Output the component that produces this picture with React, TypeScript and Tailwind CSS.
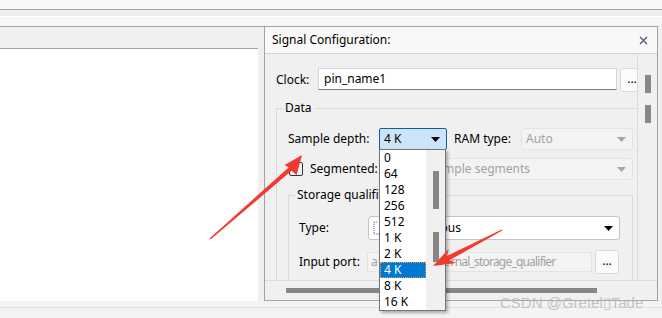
import React from 'react';

const items = ['0', '64', '128', '256', '512', '1 K', '2 K', '4 K', '8 K', '16 K'];

function Arrow({ className, disabled }: { className?: string; disabled?: boolean }) {
  return (
    <svg width="9" height="5" viewBox="0 0 9 5" className={className}>
      <path d="M0 0H9L4.5 5Z" fill={disabled ? '#a6a6a6' : '#000'} />
    </svg>
  );
}

function Combo({
  text,
  disabled,
  className,
  textClass,
  children,
}: {
  text: string;
  disabled?: boolean;
  className?: string;
  textClass?: string;
  children?: React.ReactNode;
}) {
  return (
    <div
      className={`flex items-center rounded-[3px] border pl-[4px] pr-[6px] ${
        disabled ? 'border-[#e3e3e3] bg-[#f3f3f3] text-[#a2a2a2]' : 'border-[#c5c5c5] bg-white text-black'
      } ${className ?? ''}`}
    >
      {children}
      <span className={`flex-1 whitespace-pre overflow-hidden ${textClass ?? ''}`}>{text}</span>
      <Arrow disabled={disabled} />
    </div>
  );
}

function Dots({ className }: { className?: string }) {
  return (
    <div
      className={`flex items-center justify-center rounded-[3px] border border-[#dadada] bg-[#fbfbfb] text-[12px] leading-none pb-[3px] ${className ?? ''}`}
    >
      ...
    </div>
  );
}

export default function App() {
  return (
    <div className="relative w-[662px] h-[318px] overflow-hidden bg-[#f0f0f0] font-['Noto_Sans',sans-serif] text-[12px] text-black">
      {/* top strips */}
      <div className="h-[9px] bg-[#f7f7f7]" />
      <div className="h-px bg-[#a3a3a3]" />
      <div className="h-[6px] bg-[#eeeeee]" />
      <div className="h-px bg-white" />
      <div className="h-[9px] bg-[#f6f6f6]" />
      <div className="h-px w-[658px] bg-[#a3a3a3]" />

      <div className="flex h-[274px]">
        {/* left panel */}
        <div className="flex w-[258px] flex-col">
          <div className="h-[22px] bg-[#f0f0f0] border-b border-[#a3a3a3]" />
          <div className="flex-1 bg-white" />
        </div>
        <div className="w-[6px] bg-[#f0f0f0]" />

        {/* right panel */}
        <div className="flex w-[394px] flex-col border-x border-b border-[#a3a3a3] bg-[#f0f0f0]">
          <div className="flex h-[27px] items-center border-b border-[#d4d4d4] bg-[#f8f8f8] pl-[7px] pr-[9px]">
            <span className="flex-1">Signal Configuration:</span>
            <svg width="9" height="9" viewBox="0 0 9 9">
              <path d="M1 1L8 8M8 1L1 8" stroke="#4b5a6d" strokeWidth="1.3" />
            </svg>
          </div>

          <div className="flex h-[226px]">
            {/* viewport */}
            <div className="w-[372px] overflow-hidden">
              <div className="w-[390px] pl-[11px] pt-[14px]">
                <div className="flex items-start">
                  <span className="w-[42px] pt-[3px]">Clock:</span>
                  <div className="h-[22px] w-[299px] border border-[#d5d5d5] border-b-[#7a7a7a] bg-white pl-[5px] leading-[20px]">
                    pin_name1
                  </div>
                  <Dots className="ml-[3px] h-[24px] w-[24px]" />
                </div>

                <fieldset className="mt-[9px] w-[369px] border border-[#d9d9d9]">
                  <legend className="ml-[5px] px-[3px] leading-[14px]">Data</legend>
                  <div className="pl-[11px] pb-[20px]">
                    <div className="mt-[13px] flex items-center">
                      <span className="w-[91px]">Sample depth:</span>
                      <div className="flex h-[22px] w-[68px] items-center rounded-[2px] border border-[#0b5ea8] bg-[#cce4f7] pl-[4px] pr-[6px]">
                        <span className="flex-1">4 K</span>
                        <Arrow />
                      </div>
                      <span className="ml-[7px] w-[67px]">RAM type:</span>
                      <Combo text="Auto" disabled className="h-[22px] w-[112px]" />
                    </div>
                    <div className="mt-[8px] flex items-center">
                      <div className="ml-px h-[14px] w-[14px] rounded-[2px] border border-[#333333]" />
                      <span className="ml-[7px] w-[69px]">Segmented:</span>
                      <Combo text="2  2 K sample segments" disabled textClass="pl-[13px]" className="h-[22px] w-[254px]" />
                    </div>

                    <fieldset className="mt-[8px] w-[345px] border border-[#d9d9d9]">
                      <legend className="ml-[6px] px-[2px] leading-[14px]">Storage qualifier</legend>
                      <div className="pl-[10px] pb-[20px]">
                        <div className="mt-[14px] flex items-center">
                          <span className="w-[69px]">Type:</span>
                          <Combo text="Continuous" className="h-[24px] w-[252px]">
                            <svg width="10" height="14" viewBox="0 0 10 14" className="mr-[13px]">
                              <path d="M1 1V13M1 13H9M1 1H4" stroke="#3a6fc4" strokeWidth="1" strokeDasharray="1 1" fill="none" />
                            </svg>
                          </Combo>
                        </div>
                        <div className="mt-[10px] flex items-center">
                          <span className="w-[68px]">Input port:</span>
                          <div className="h-[20px] w-[225px] border border-[#e3e3e3] bg-[#f3f3f3] pl-[3px] leading-[18px] text-[#a2a2a2] whitespace-nowrap overflow-hidden">
                            <span className="tracking-[0.5px]">auto_sq_exte</span>
                            <span className="tracking-[-0.8px]">rnal_storage_qualifier</span>
                          </div>
                          <Dots className="ml-[3px] h-[24px] w-[24px]" />
                        </div>
                        <div className="mt-[10px] h-[22px]" />
                      </div>
                    </fieldset>
                  </div>
                </fieldset>
              </div>
            </div>

            {/* vertical scrollbar */}
            <div className="flex w-[20px] flex-col items-center border-l border-[#dcdcdc] bg-[#f0f0f0] pt-[21px]">
              <div className="h-[18px] w-[6px] bg-[#868686]" />
              <div className="mt-[12px] h-[18px] w-[6px] bg-[#868686]" />
            </div>
          </div>

          {/* horizontal scrollbar */}
          <div className="flex-1 border-t border-[#dcdcdc] pl-[21px] pt-[7px]">
            <div className="h-[5px] w-[311px] bg-[#868686]" />
          </div>
        </div>
      </div>

      <div className="h-[6px] bg-[#f3f3f3]" />
      <div className="h-px bg-[#e2e2e2]" />
      <div className="h-[10px] bg-[#f3f3f3]" />

      {/* open dropdown list */}
      <div className="absolute left-[379px] top-[149px] flex h-[162px] w-[67px] border border-[#767676] bg-white shadow-[2px_2px_3px_rgba(0,0,0,0.3)]">
        <div className="flex w-[46px] flex-col">
          {items.map((it) => (
            <div
              key={it}
              className={`h-[16px] pl-[3px] leading-[14px] ${
                it === '4 K' ? 'border border-dotted border-[#e8a040] bg-[#0078d7] text-white' : 'border border-transparent'
              }`}
            >
              {it}
            </div>
          ))}
        </div>
        <div className="flex flex-1 flex-col items-center bg-[#f0f0f0] pt-[21px]">
          <div className="h-[38px] w-[6px] bg-[#868686]" />
          <div className="mt-[23px] h-[30px] w-[6px] bg-[#868686]" />
        </div>
      </div>

      {/* annotation arrows */}
      <svg className="pointer-events-none absolute left-0 top-0" width="662" height="318" viewBox="0 0 662 318">
        <polygon
          points="302,155 284.6,164.9 288.6,167.6 209.5,238.4 210.5,239.6 291.5,170.8 296.6,174.9"
          fill="#ef3b32"
        />
        <polygon
          points="433,266 448.8,248.7 446.9,255.9 501.7,229.4 502.3,230.6 449.3,260.3 456.2,262.9"
          fill="#ef3b32"
        />
      </svg>

      {/* watermark */}
      <div className="pointer-events-none absolute left-[500px] top-[293px] font-['Liberation_Sans',sans-serif] text-[15px] leading-[20px] text-[#bdbdbd]/90">
        CSDN @Gretel▯Tade
      </div>
    </div>
  );
}
